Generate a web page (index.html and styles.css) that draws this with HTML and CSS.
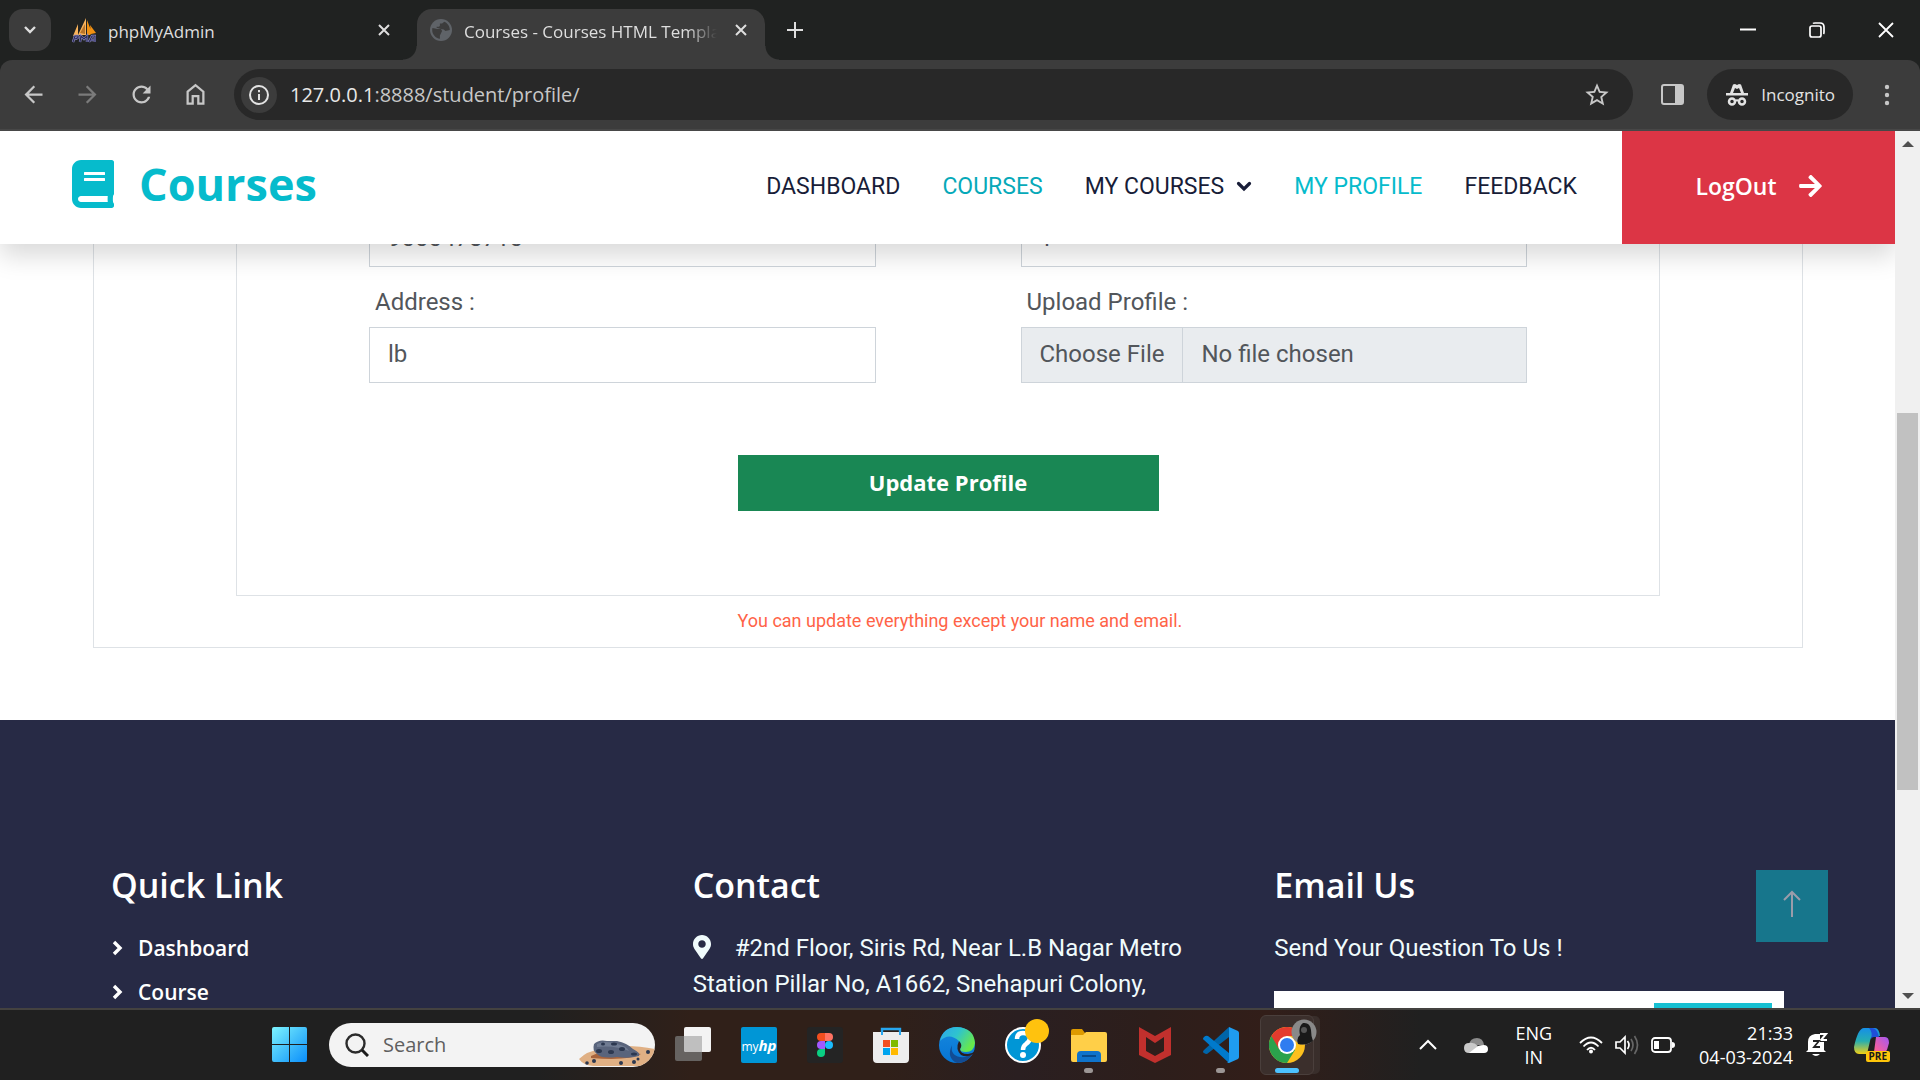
FILE: index.html
```html
<!DOCTYPE html>
<html lang="en">
<head>
<meta charset="utf-8">
<meta name="viewport" content="width=device-width, initial-scale=1">
<title>Courses - Courses HTML Template</title>
<link rel="stylesheet" href="styles.css">
</head>
<body>
<div class="tabbar">
  <button class="tab-search" type="button" aria-label="Search tabs">
    <svg width="14" height="10" viewBox="0 0 14 10"><path d="M2 2l5 5 5-5" fill="none" stroke="currentColor" stroke-width="2.4"/></svg>
  </button>
  <div class="tab">
    <svg width="24" height="25" viewBox="0 0 24 25">
      <path d="M1 18L6 6v11zM6 17L14 0v17z" fill="#f9b35b"/><path d="M15 17V2l5 13-2 2zM19 16l-1-9 6 8z" fill="#f29111"/><path d="M8 15l5-9v10z" fill="#b8742a"/>
      <path d="M1 24l2-6h3q1 2-3 3M8 24l1-6 3 3 3-3v6M17 24l3-6h3v6M18 22h4" fill="none" stroke="#8f8fc4" stroke-width="2.4"/>
      <path d="M1 24l2-6h3q1 2-3 3M8 24l1-6 3 3 3-3v6M17 24l3-6h3v6M18 22h4" fill="none" stroke="#2d2c5e" stroke-width="1.2"/>
    </svg>
    <span class="tab-title">phpMyAdmin</span>
    <button class="tab-close" type="button" aria-label="Close tab"><svg width="12" height="12" viewBox="0 0 12 12"><path d="M1 1l10 10M11 1L1 11" stroke="currentColor" stroke-width="2"/></svg></button>
  </div>
  <div class="tab tab-active">
    <svg width="22" height="22" viewBox="2 2 20 20"><circle cx="12" cy="12" r="10" fill="#5f6368"/><path d="M11 19.93c-3.95-.49-7-3.85-7-7.93 0-.62.08-1.21.21-1.79L9 11h3l1 2-1 2-1 2zM8 10V9h2c.55 0 1-.45 1-1V6h2l2-1.4c2.93 1.19 5 4.06 5 7.41l-4 1-1.500-1.500-2.500-.5z" fill="#3c3c3c"/></svg>
    <span class="tab-title">Courses - Courses HTML Template</span>
    <button class="tab-close" type="button" aria-label="Close tab"><svg width="12" height="12" viewBox="0 0 12 12"><path d="M1 1l10 10M11 1L1 11" stroke="currentColor" stroke-width="2"/></svg></button>
  </div>
  <button class="tab-new" type="button" aria-label="New tab"><svg width="16" height="16" viewBox="0 0 16 16"><path d="M8 0v16M0 8h16" stroke="currentColor" stroke-width="2"/></svg></button>
  <div class="window-controls">
    <button type="button" aria-label="Minimize"><svg width="16" height="16" viewBox="0 0 16 16"><path d="M0 7.500h16" stroke="#fff" stroke-width="2"/></svg></button>
    <button type="button" aria-label="Restore"><svg width="16" height="16" viewBox="0 0 16 16"><g fill="none" stroke="#fff" stroke-width="1.700"><rect x="1" y="4" width="11" height="11" rx="2"/><path d="M4 1.500Q4.500 1 6 1h5q4 0 4 4v5q0 1.500-.5 2"/></g></svg></button>
    <button type="button" aria-label="Close"><svg width="16" height="16" viewBox="0 0 16 16"><path d="M1 1l14 14M15 1L1 15" stroke="#fff" stroke-width="1.800"/></svg></button>
  </div>
</div>

<div class="toolbar">
  <div class="nav-buttons">
    <button type="button" aria-label="Back"><svg width="27" height="27" viewBox="0 0 24 24"><path d="M20 11H7.830l5.590-5.590L12 4l-8 8 8 8 1.410-1.410L7.830 13H20z" fill="currentColor"/></svg></button>
    <button type="button" class="dim" aria-label="Forward"><svg width="27" height="27" viewBox="0 0 24 24"><path d="M4 11h12.170l-5.590-5.590L12 4l8 8-8 8-1.410-1.410L16.170 13H4z" fill="currentColor"/></svg></button>
    <button type="button" aria-label="Reload"><svg width="27" height="27" viewBox="0 0 24 24"><path d="M17.650 6.350C16.200 4.900 14.210 4 12 4c-4.420 0-7.990 3.580-7.990 8s3.570 8 7.990 8c3.730 0 6.840-2.550 7.730-6h-2.080c-.82 2.330-3.040 4-5.650 4-3.310 0-6-2.690-6-6s2.690-6 6-6c1.660 0 3.140.69 4.220 1.780L13 11h7V4z" fill="currentColor"/></svg></button>
    <button type="button" aria-label="Home"><svg width="27" height="27" viewBox="0 0 24 24"><path d="M5 9.500l7-5.800 7 5.800V20h-4.500v-6.500h-5V20H5z" fill="none" stroke="currentColor" stroke-width="2"/></svg></button>
  </div>
  <div class="omnibox">
    <span class="site-info"><svg width="22" height="22" viewBox="0 0 22 22"><circle cx="11" cy="11" r="9" fill="none" stroke="#e3e3e3" stroke-width="2"/><path d="M11 10v6M11 6v2.200" stroke="#e3e3e3" stroke-width="2"/></svg></span>
    <div class="url"><b>127.0.0.1</b>:8888/student/profile/</div>
    <svg width="28" height="28" viewBox="0 0 24 24"><path d="M22 9.240l-7.190-.62L12 2 9.190 8.630 2 9.240l5.460 4.730L5.820 21 12 17.270 18.180 21l-1.630-7.030zM12 15.400l-3.760 2.270 1-4.280-3.320-2.880 4.380-.38L12 6.100l1.710 4.040 4.380.38-3.320 2.880 1 4.280z" fill="#c7c7c7"/></svg>
  </div>
  <button class="side-panel" type="button" aria-label="Side panel"><svg width="23" height="23" viewBox="0 0 23 23"><rect x="1" y="2" width="21" height="19" rx="2" fill="none" stroke="#c7c7c7" stroke-width="2"/><path d="M14 2h8v19h-8z" fill="#c7c7c7"/></svg></button>
  <button class="incognito" type="button">
    <svg width="24" height="24" viewBox="0 0 24 24" fill="#e3e3e3"><path d="M1 10h22v2.500H1zM5 10l3-8.500L10 1l2 1 2-1 2 .5L19 10h-3l-2-5-2 1-2-1-2 5z"/><path d="M10 18q2-1.500 4 0" fill="none" stroke="#e3e3e3" stroke-width="2"/><circle cx="7" cy="18.500" r="3" fill="none" stroke="#e3e3e3" stroke-width="2.500"/><circle cx="17" cy="18.500" r="3" fill="none" stroke="#e3e3e3" stroke-width="2.500"/></svg>
    Incognito
  </button>
  <button class="menu-dots" type="button" aria-label="Menu"><svg width="6" height="22" viewBox="0 0 6 22" fill="#c7c7c7"><circle cx="3" cy="3" r="2.200"/><circle cx="3" cy="11" r="2.200"/><circle cx="3" cy="19" r="2.200"/></svg></button>
</div>

<div class="viewport">
  <div class="page">
    <header class="site-nav">
      <a class="brand" href="#"><svg width="42" height="48" viewBox="0 0 448 512"><path fill="currentColor" d="M448 360V24c0-13.300-10.700-24-24-24H96C43 0 0 43 0 96v320c0 53 43 96 96 96h328c13.300 0 24-10.700 24-24v-16c0-7.500-3.500-14.300-8.900-18.700-4.200-15.400-4.200-59.300 0-74.700 5.400-4.300 8.900-11.100 8.900-18.600zM128 134c0-3.300 2.700-6 6-6h212c3.300 0 6 2.700 6 6v20c0 3.300-2.700 6-6 6H134c-3.300 0-6-2.700-6-6v-20zm0 64c0-3.300 2.700-6 6-6h212c3.300 0 6 2.700 6 6v20c0 3.300-2.700 6-6 6H134c-3.300 0-6-2.700-6-6v-20zm253.400 250H96c-17.700 0-32-14.300-32-32 0-17.600 14.400-32 32-32h285.400c-1.900 17.100-1.900 46.900 0 64z"/></svg>Courses</a>
      <nav class="links">
        <a href="#">DASHBOARD</a>
        <a href="#" class="teal">COURSES</a>
        <a href="#">MY COURSES <svg width="16" height="12" viewBox="0 0 16 12"><path d="M2.500 2.500L8 8l5.500-5.500" fill="none" stroke="currentColor" stroke-width="3.200" stroke-linecap="round"/></svg></a>
        <a href="#" class="active">MY PROFILE</a>
        <a href="#">FEEDBACK</a>
      </nav>
      <a class="logout" href="#">LogOut <svg width="23" height="26" viewBox="0 0 448 512"><path fill="currentColor" d="M190.500 66.900l22.200-22.200c9.400-9.400 24.600-9.400 33.900 0L441 239c9.400 9.400 9.400 24.600 0 33.900L246.600 467.300c-9.400 9.400-24.600 9.400-33.900 0l-22.200-22.200c-9.500-9.500-9.300-25 .4-34.300L311.400 296H24c-13.300 0-24-10.700-24-24v-32c0-13.300 10.700-24 24-24h287.400L190.900 101.200c-9.800-9.300-10-24.800-.4-34.300z"/></svg></a>
    </header>

    <main class="content">
      <section class="panel">
        <form class="profile">
          <div class="fields">
            <input class="control" type="text" value="9000478710" aria-label="Mobile">
            <input class="control" type="text" value="1" aria-label="Semester">
            <div class="field">
              <label for="address">Address :</label>
              <input class="control" id="address" type="text" value="lb">
            </div>
            <div class="field">
              <label for="photo">Upload Profile :</label>
              <input class="control file" id="photo" type="file">
            </div>
          </div>
          <button class="update" type="button">Update Profile</button>
        </form>
        <p class="note">You can update everything except your name and email.</p>
      </section>
      <footer class="footer">
        <section>
          <h2>Quick Link</h2>
          <ul class="quick">
            <li><a href="#"><svg width="12" height="18" viewBox="0 0 12 18"><path d="M3 3l6 6-6 6" fill="none" stroke="currentColor" stroke-width="3.400"/></svg>Dashboard</a></li>
            <li><a href="#"><svg width="12" height="18" viewBox="0 0 12 18"><path d="M3 3l6 6-6 6" fill="none" stroke="currentColor" stroke-width="3.400"/></svg>Course</a></li>
          </ul>
        </section>
        <section>
          <h2>Contact</h2>
          <p><svg class="pin" width="18" height="24" viewBox="0 0 384 512"><path fill="currentColor" d="M172.268 501.670C26.970 291.031 0 269.413 0 192 0 85.961 85.961 0 192 0s192 85.961 192 192c0 77.413-26.970 99.031-172.268 309.670-9.535 13.774-29.930 13.773-39.464 0zM192 272c44.183 0 80-35.817 80-80s-35.817-80-80-80-80 35.817-80 80 35.817 80 80 80z"/></svg>#2nd Floor, Siris Rd, Near L.B Nagar Metro Station Pillar No, A1662, Snehapuri Colony,</p>
        </section>
        <section>
          <h2>Email Us</h2>
          <p>Send Your Question To Us !</p>
          <div class="ask"><input type="text" aria-label="Your question"><button type="button" aria-label="Send"></button></div>
        </section>
      </footer>
    </main>
    <a class="to-top" href="#" aria-label="Back to top"><svg width="20" height="28" viewBox="0 0 20 28"><path d="M10 27V2M2 10l8-8 8 8" fill="none" stroke="#9a9caa" stroke-width="2"/></svg></a>
  </div>
  <div class="scrollbar">
    <svg width="12" height="8" viewBox="0 0 12 8"><path d="M0 7h12L6 1z" fill="#505050"/></svg>
    <i></i><b class="thumb"></b><i></i>
    <svg width="12" height="8" viewBox="0 0 12 8"><path d="M0 1h12L6 7z" fill="#505050"/></svg>
  </div>
</div>

<div class="taskbar">
  <button class="start" type="button" aria-label="Start"><svg width="36" height="36" viewBox="0 0 36 36"><defs><linearGradient id="win" x1="0" y1="0" x2="1" y2="1"><stop offset="0" stop-color="#7df4ff"/><stop offset=".5" stop-color="#43c0fb"/><stop offset="1" stop-color="#0a8efc"/></linearGradient></defs><path d="M2 0h15v17H0V2q0-2 2-2zM18 0h15q2 0 2 2v15H18zM0 18h17v17H2q-2 0-2-2zM18 18h17v15q0 2-2 2H18z" fill="url(#win)"/></svg></button>
  <div class="search">
    <svg width="24" height="24" viewBox="0 0 24 24"><circle cx="10.500" cy="10.500" r="9" fill="none" stroke="#2b2b2b" stroke-width="2.400"/><path d="M17 17l6 6" stroke="#1b1b1b" stroke-width="3"/></svg>
    <input type="text" placeholder="Search" aria-label="Search">
    <svg class="scene" width="76" height="28" viewBox="0 0 76 28">
      <path d="M0 20Q8 12 22 10 45 4 76 10v17H14Q4 26 0 20z" fill="#e0b084"/><path d="M12 17Q30 8 62 15 50 22 12 19z" fill="#a8643c"/>
      <path d="M15 5Q20 0 28 2L38 2Q48 4 54 10 62 14 60 17 50 20 38 18 22 20 18 15 13 12 15 5z" fill="#59647c"/><path d="M18 5q8-4 20 0 10 2 12 7-14-6-32-4z" fill="#8591a8" opacity=".5"/>
      <g fill="#2c3850"><ellipse cx="20" cy="12" rx="3" ry="2"/><ellipse cx="35" cy="5" rx="3" ry="1.500"/><ellipse cx="24" cy="5" rx="2" ry="1.500"/><ellipse cx="43" cy="10" rx="3" ry="2"/><ellipse cx="32" cy="13" rx="3" ry="2"/><ellipse cx="55" cy="15" rx="3" ry="1.500"/><circle cx="8" cy="24" r="1.800"/><circle cx="15" cy="22" r="2"/><circle cx="42" cy="24" r="2"/><circle cx="55" cy="23" r="2"/><circle cx="59" cy="20" r="1.500"/><circle cx="69" cy="13" r="2"/></g>
    </svg>
  </div>
  <div class="apps">
    <button type="button" aria-label="Task view"><svg width="36" height="36" viewBox="0 0 36 36"><rect y="9" width="27" height="25" rx="2" fill="#666361"/><rect x="9" width="27" height="25" rx="2" fill="#f3f3f3"/><path d="M9 9h18v16H11q-2 0-2-2z" fill="#bfbfbf"/></svg></button>
    <button type="button" aria-label="myHP"><span class="myhp">my<b>hp</b></span></button>
    <button type="button" aria-label="Figma"><svg width="36" height="36" viewBox="0 0 36 36"><rect width="36" height="36" rx="3" fill="#242424"/><path d="M14 6h4v8h-4a4 4 0 0 1 0-8z" fill="#f24e1e"/><path d="M18 6h4a4 4 0 0 1 0 8h-4z" fill="#ff7262"/><path d="M14 14h4v8h-4a4 4 0 0 1 0-8z" fill="#a259ff"/><circle cx="22" cy="18" r="4" fill="#1abcfe"/><path d="M14 22h4v4a4 4 0 1 1-4-4z" fill="#0acf83"/></svg></button>
    <button type="button" aria-label="Microsoft Store"><svg width="36" height="36" viewBox="0 0 36 36"><path d="M9 9V2h18v7" fill="none" stroke="#27a7f0" stroke-width="2.400"/><path d="M0 5h8v3h2V5h16v3h2V5h8v27q0 4-4 4H4q-4 0-4-4z" fill="#ededed"/><path d="M10 13h7v7h-7z" fill="#f25022"/><path d="M18 13h7v7h-7z" fill="#7fba00"/><path d="M10 21h7v7h-7z" fill="#00a4ef"/><path d="M18 21h7v7h-7z" fill="#ffb900"/></svg></button>
    <button type="button" aria-label="Microsoft Edge"><svg width="36" height="36" viewBox="0 0 36 36"><defs><linearGradient id="ea" x1="0" y1="0" x2="1" y2=".5"><stop offset="0" stop-color="#2da5ed"/><stop offset=".5" stop-color="#2ec3cf"/><stop offset="1" stop-color="#67e84c"/></linearGradient><linearGradient id="eb" x1="0" y1="0" x2="0" y2="1"><stop offset="0" stop-color="#1788dd"/><stop offset="1" stop-color="#0675d5"/></linearGradient></defs><circle cx="18" cy="18" r="18" fill="url(#eb)"/><path d="M13 18q-2 10 8 12 7 1 13-4-5 10-16 10Q7 31 13 18z" fill="#124c94"/><path d="M1 14Q4 0 18 0q17 1 18 16-1 9-9 9-6 0-6-3 3-4-1-8Q10 5 1 14z" fill="url(#ea)"/><path d="M20 14q4 4 1 8 0 5 8 5 4 0 7-3l-2 3q-6 4-12 1-6-6-2-14z" fill="#2a1f20"/></svg></button>
    <button type="button" aria-label="Help" class="badged"><svg width="36" height="36" viewBox="0 0 36 36"><circle cx="18" cy="18" r="17" fill="#0096d6" stroke="#fff" stroke-width="2"/><path d="M12 12q0-6 6-6 7 0 7 5 0 3-4 6-3 2-3 6" fill="none" stroke="#fff" stroke-width="4.500"/><circle cx="18" cy="28" r="3" fill="#fff"/></svg></button>
    <button type="button" aria-label="File Explorer" class="running"><svg width="36" height="36" viewBox="0 0 36 36"><path d="M0 4q0-2 2-2h9l3 4v4H0z" fill="#dd9a00"/><path d="M0 8h12l3-3h19q2 0 2 2v26q0 2-2 2H2q-2 0-2-2z" fill="#ffcf48"/><path d="M6 35v-7q0-4 4-4h16q4 0 4 4v7z" fill="#0f73cb"/><path d="M11 29h14" stroke="#084b8c" stroke-width="2"/></svg></button>
    <button type="button" aria-label="McAfee"><svg width="36" height="36" viewBox="0 0 36 36"><path d="M2 0l16 9 16-9v28l-16 8-16-8zM9 10v14l9 5 9-5V10l-9 6z" fill="#c1302d" fill-rule="evenodd"/></svg></button>
    <button type="button" aria-label="Visual Studio Code" class="running"><svg width="36" height="36" viewBox="0 0 36 36"><path d="M1 23l25-23v10L4 27q-2 0-3-1-2-1 0-3z" fill="#0065a9"/><path d="M1 13q-2-1 0-3 2-2 4-1l21 17v10L1 13z" fill="#007acc"/><path d="M26 0l9 4q1 1 1 2v24q0 1-1 2l-9 4-3-1q3 1 3-3V4z" fill="#1f9cf0"/></svg></button>
    <button type="button" aria-label="Google Chrome" class="focused"><svg width="36" height="36" viewBox="0 0 36 36"><circle cx="18" cy="18" r="18" fill="#fcc01e"/><path d="M18 18L2.400 9A18 18 0 0 0 18 36l8-13z" fill="#2ba24c"/><path d="M2.400 9a18 18 0 0 1 31.200 0H18l-8 13z" fill="#e33b2e"/><circle cx="18" cy="18" r="9" fill="#fff"/><circle cx="18" cy="18" r="7" fill="#2f7cf0"/></svg>
      <span class="avatar"><svg width="26" height="26" viewBox="0 0 26 26"><circle cx="13" cy="13" r="12.500" fill="#898989"/><path d="M7 25q-2-6 2-9-2-8 3-12 7-1 8 7 0 6 2 11-7 5-15 3z" fill="#191919"/><circle cx="13" cy="11" r="3" fill="#555"/></svg></span></button>
  </div>
  <div class="tray">
    <svg width="18" height="12" viewBox="0 0 18 12"><path d="M1 10l8-8 8 8" fill="none" stroke="#fff" stroke-width="2"/></svg>
    <svg width="24" height="17" viewBox="0 0 24 17"><path d="M5 8q1-7 8-7 6 0 7 7z" fill="#8c8c8c"/><path d="M5 16q-5 0-5-5t5-5q5-1 9 3l-5 7z" fill="#c9c9c9"/><path d="M5 16l9-7q10-3 10 3 0 4-4 4z" fill="#fff"/></svg>
    <div class="lang">ENG<br>IN</div>
    <div class="status">
      <svg width="24" height="18" viewBox="0 0 24 18"><g fill="none" stroke="#fff" stroke-width="1.800"><path d="M1 7q11-11 22 0M4.500 10.500q7.500-8 15 0M8 14q4-4.500 8 0"/></g><circle cx="12" cy="15.500" r="2" fill="#fff"/></svg>
      <svg width="24" height="20" viewBox="0 0 24 20"><g fill="none" stroke="#fff" stroke-width="1.700"><path d="M1 7v6h4l5 5V2L5 7zM12.500 6q3 4 0 8"/><path d="M16 4q4 6 0 12M19.500 1q6 9 0 18" stroke="#666"/></g></svg>
      <svg width="24" height="16" viewBox="0 0 24 16"><rect x="1" y="1" width="19" height="14" rx="3" fill="none" stroke="#fff" stroke-width="1.800"/><path d="M3 4h5v8H3zM21 5q3 0 3 3t-3 3z" fill="#fff"/></svg>
    </div>
    <div class="clock">21:33<br>04-03-2024</div>
    <svg width="22" height="24" viewBox="0 0 22 24"><path d="M2 17V9q0-7 7-8h5v8h4v8l2 2H0zM6 21h8q-4 4-8 0z" fill="#fff"/><path d="M14 1h6l-5 6h6" fill="none" stroke="#fff" stroke-width="2"/><path d="M7 8h6l-5 6h6" fill="none" stroke="#222" stroke-width="1.800"/></svg>
    <span class="copilot"><svg width="36" height="34" viewBox="0 0 36 34"><defs><linearGradient id="ca" x1="0" y1="0" x2="0" y2="1"><stop offset="0" stop-color="#168fe8"/><stop offset=".5" stop-color="#26aeb0"/><stop offset="1" stop-color="#f2cf16"/></linearGradient><linearGradient id="cb" x1="1" y1="0" x2="0" y2="1"><stop offset="0" stop-color="#a258f4"/><stop offset=".6" stop-color="#f45fa0"/><stop offset="1" stop-color="#ff8748"/></linearGradient></defs><path d="M10 0h11q4 0 5 8h-6q-3 0-4 5l-3 13H5q-5 0-5-7Q4 0 10 0z" fill="url(#ca)"/><path d="M18 0q5 0 7 9h-5q-2 0-3 2 2-7-2-11z" fill="#1f4fd8"/><path d="M22 9h9q4 0 4 6-3 13-9 15H15q4-1 5-6z" fill="url(#cb)"/></svg><b>PRE</b></span>
  </div>
</div>
</body>
</html>
```
FILE: styles.css
```css
* { box-sizing: border-box; }
body {
  margin: 0;
  height: 100vh;
  display: flex;
  flex-direction: column;
  overflow: hidden;
  background: #202221;
  font-family: Roboto, sans-serif;
}
button { border: 0; padding: 0; background: none; color: inherit; font: inherit; display: flex; align-items: center; justify-content: center; }
a { color: inherit; text-decoration: none; }
svg { flex: none; display: block; }

/* Browser tabs */
.tabbar { flex: none; height: 60px; display: flex; padding-left: 9px; background: #202221; color: #dedede; font: 17px/24px "Open Sans", sans-serif; }
.tab-search { width: 42px; height: 42px; margin: 9px 6px 0 0; border-radius: 14px; background: #3c3c3c; }
.tab { width: 360px; height: 51px; margin-top: 9px; padding: 0 27px 9px 15px; display: flex; align-items: center; gap: 12px; }
.tab-title { flex: 1; min-width: 0; padding-top: 3px; overflow: hidden; white-space: nowrap; }
.tab-active { position: relative; width: 348px; padding: 0 18px 9px 13px; border-radius: 15px 15px 0 0; background: #3c3c3c; }
.tab-active .tab-title { margin-right: 6px; -webkit-mask-image: linear-gradient(90deg, #000 88%, transparent); mask-image: linear-gradient(90deg, #000 88%, transparent); }
.tab-active::before, .tab-active::after { content: ""; position: absolute; bottom: 0; width: 14px; height: 14px; }
.tab-active::before { right: 100%; background: radial-gradient(circle at 0 0, transparent 13px, #3c3c3c 14px); }
.tab-active::after { left: 100%; background: radial-gradient(circle at 100% 0, transparent 13px, #3c3c3c 14px); }
.tab-new { width: 60px; }
.window-controls { margin-left: auto; display: flex; }
.window-controls button { width: 69px; }

/* Address bar row */
.toolbar { flex: none; height: 71px; display: flex; align-items: center; padding: 0 30px 0 6px; background: #3c3c3c; border-bottom: 2px solid #474747; border-radius: 12px 12px 0 0; color: #c7c7c7; }
.nav-buttons { display: flex; }
.nav-buttons button { width: 54px; }
.nav-buttons .dim { color: #7b7b7b; }
.omnibox { flex: 1; height: 51px; display: flex; align-items: center; margin-left: 12px; padding: 0 22px 0 7px; border-radius: 26px; background: #282828; }
.site-info { width: 36px; height: 36px; border-radius: 50%; display: flex; align-items: center; justify-content: center; background: #3c3c3c; }
.url { flex: 1; margin-left: 13px; font: 20px/28px "Open Sans", sans-serif; }
.url b { font-weight: 400; color: #e8e8e8; }
.side-panel { width: 74px; padding-left: 4px; }
.incognito { height: 51px; padding: 0 18px; gap: 12px; border-radius: 26px; background: #282828; color: #e3e3e3; font: 17px/24px "Open Sans", sans-serif; }
.menu-dots { margin-left: 31px; }

/* Page area */
.viewport { flex: 1; min-height: 0; display: flex; background: #fff; }
.page { flex: 1; min-width: 0; display: grid; grid-template: minmax(0, 1fr) / minmax(0, 1fr); overflow: hidden; }
.page > * { grid-area: 1 / 1; }
.scrollbar { width: 25px; background: #f0f0f0; display: grid; grid-template-rows: 25px 257fr 377fr 193fr 25px; place-items: center; }
.thumb { width: 21px; height: 100%; background: #c1c1c1; }

.site-nav { z-index: 1; align-self: start; height: 113px; display: flex; align-items: center; background: #fff; color: #181d38; box-shadow: 0 12px 24px rgba(0, 0, 0, .15); }
.brand { display: flex; align-items: center; gap: 25px; margin-left: 72px; padding-bottom: 7px; color: #06bbcc; font: 700 45px/58px "Open Sans", sans-serif; }
.links { margin-left: auto; padding-bottom: 2px; display: flex; gap: 42px; font-size: 23px; line-height: 34px; }
.links a { display: flex; align-items: center; gap: 12px; }
.links .active { color: #06bbcc; }
.links .teal { color: #06a9b9; }
.logout { align-self: stretch; width: 273px; margin-left: 45px; padding-bottom: 4px; display: flex; align-items: center; justify-content: center; gap: 22px; background: #dc3545; color: #fff; font: 600 23px/34px "Open Sans", sans-serif; }

.content { display: flex; flex-direction: column; overflow: hidden; color: #52565b; }
.panel { flex: none; height: 517px; margin: 0 92px 72px 93px; border: 1px solid #dee2e6; border-top: 0; }
.profile { height: 465px; margin: 0 142px; padding: 80px 132px 0; border: 1px solid #dee2e6; border-top: 0; }
.fields { display: grid; grid-template-columns: 1fr 1fr; column-gap: 145px; row-gap: 17px; }
.field { min-width: 0; }
.field label { display: block; padding-left: 6px; margin-bottom: 7px; font-size: 24px; line-height: 36px; }
.control { display: block; width: 100%; height: 56px; padding: 0 18px 2px; border: 1px solid #ced4da; border-radius: 0; background: #fff; color: #52565b; font: 24px/52px Roboto, sans-serif; }
.file { padding: 0; background: #e9ecef; }
.file::file-selector-button { height: 54px; margin: 0 18px 0 0; padding: 0 18px 2px; border: 0; border-right: 1px solid #ced4da; background: #e9ecef; color: #52565b; font: 24px/52px Roboto, sans-serif; }
.update { width: 421px; height: 56px; margin: 72px auto 0; padding-bottom: 2px; background: #198754; color: #fff; font: 700 22px/34px "Open Sans", sans-serif; }
.note { width: 421px; margin: 11px auto 0; white-space: nowrap; color: #ff6347; font-size: 18px; line-height: 27px; }

.footer { flex: 1 0 auto; display: grid; grid-template-columns: repeat(3, minmax(0, 1fr)); gap: 72px; padding: 144px 111px 0; background: #272a45; color: #f0fbfc; }
.footer h2 { margin: 0 0 24px; color: #fff; font: 600 34px/42px "Open Sans", sans-serif; }
.footer p { margin: 0; font-size: 24px; line-height: 36px; }
.quick { margin: 0; padding: 2px 0 0; list-style: none; color: #fff; font: 600 21px/32px "Open Sans", sans-serif; }
.quick li { margin-bottom: 12px; }
.quick a { display: flex; align-items: center; gap: 15px; }
.pin { display: inline-block; margin-right: 24px; vertical-align: -3px; }
.ask { display: flex; justify-content: flex-end; height: 72px; margin-top: 25px; padding: 12px; background: #fff; }
.ask input { flex: 1; min-width: 0; border: 0; }
.ask button { width: 118px; background: #17c0d2; }
.to-top { z-index: 1; place-self: end; width: 72px; height: 72px; margin: 0 67px 66px 0; padding-bottom: 4px; display: flex; align-items: center; justify-content: center; background: #17768c; }

/* Desktop taskbar */
.taskbar { flex: none; height: 72px; display: flex; align-items: center; padding-left: 272px; border-top: 2px solid #444240; background: linear-gradient(90deg, #202020 28%, #302019 36%, #302019 46%, #2a1f21 53%, #2d1e1b 60%, #321e19 66%, #202020 74%); color: #fff; font-family: "Open Sans", sans-serif; }
.search { width: 326px; height: 44px; display: flex; align-items: center; margin: 0 5px 0 21px; padding-left: 16px; border-radius: 22px; overflow: hidden; background: #f3f3f3; }
.search input { flex: 1; min-width: 0; margin-left: 14px; padding: 0; border: 0; background: none; font: 20px/28px "Open Sans", sans-serif; }
.search input::placeholder { color: #5f5f5f; }
.scene { align-self: flex-end; }
.apps { display: flex; }
.apps button { position: relative; width: 66px; height: 60px; }
.myhp { width: 36px; height: 36px; border-radius: 2px; background: #0096d6; font-size: 12px; line-height: 36px; text-align: center; }
.myhp b { font-style: italic; font-size: 15px; }
.badged::before { content: ""; position: absolute; top: 4px; right: 7px; width: 24px; height: 24px; border-radius: 50%; background: #ffc20e; }
.running::after, .focused::after { content: ""; position: absolute; bottom: 2px; left: 28px; width: 9px; height: 5px; border-radius: 3px; background: #9c9695; }
.focused::after { left: 21px; width: 24px; background: #4cc2ff; }
.focused::before { content: ""; position: absolute; z-index: -1; inset: 0 6px; border: 1px solid #4a3f3c; border-radius: 6px; background: #3b2f2c; box-shadow: 7px 0 0 -1px #392e2b; }
.focused { z-index: 0; }
.avatar { position: absolute; top: 4px; right: 3px; }
.tray { margin-left: auto; padding-right: 30px; display: flex; align-items: center; font-size: 18px; line-height: 24px; }
.lang { margin: 0 27px; text-align: center; }
.tray > svg + svg { margin-left: 27px; }
.status { display: flex; align-items: center; gap: 12px; }
.clock { margin: 0 13px 0 24px; text-align: right; }
.copilot { position: relative; margin-left: 26px; }
.copilot b { position: absolute; right: 0; bottom: 0; padding: 0 3px; border-radius: 2px; background: #ffc60a; color: #1a1a1a; font-size: 10px; line-height: 11px; }
```
